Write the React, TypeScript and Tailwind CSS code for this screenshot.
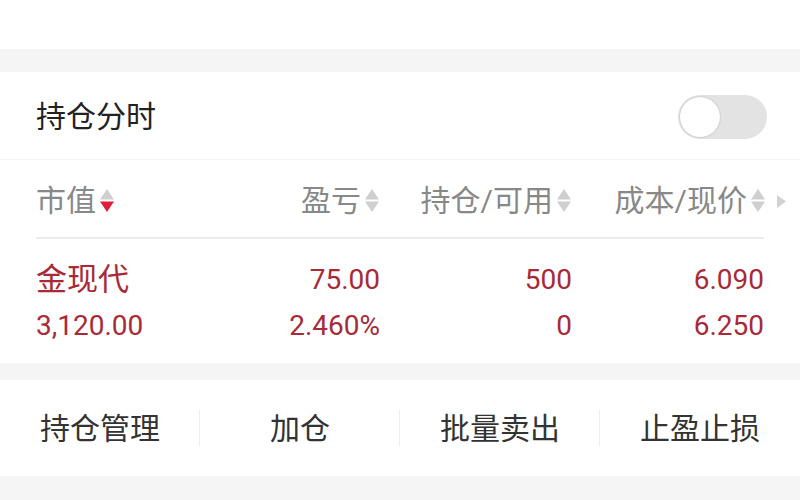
import React from "react";

const SortIcon = ({ active = false }: { active?: boolean }) => (
  <svg width="16" height="25" viewBox="0 0 16 25" className="ml-[3px] shrink-0">
    <path d="M8 1 L15 11.5 L1 11.5 Z" fill="#cfcfcf" />
    <path d="M1 13.5 L15 13.5 L8 24 Z" fill={active ? "#e0203a" : "#cfcfcf"} />
  </svg>
);

const HeaderCell = ({ label, active, right }: { label: string; active?: boolean; right?: boolean }) => (
  <div className={`flex items-center ${right ? "justify-end" : "justify-start"}`}>
    <span>{label}</span>
    <SortIcon active={active} />
  </div>
);

const actions = ["持仓管理", "加仓", "批量卖出", "止盈止损"];

const App = () => {
  return (
    <div
      className="w-[800px] h-[500px] overflow-hidden bg-white text-[#222]"
      style={{ fontFamily: 'Roboto, "Noto Sans CJK SC", sans-serif' }}
    >
      <div className="h-[49px] bg-white"></div>
      <div className="h-[23px] bg-[#f5f5f5]"></div>

      <section className="bg-white">
        <div className="h-[88px] pl-[36px] pr-[33px] pt-[3px] flex items-center justify-between border-b border-[#f4f4f4]">
          <span className="text-[30px] leading-none">持仓分时</span>
          <div className="w-[89px] h-[44px] rounded-full bg-[#e3e3e3] p-[2px] flex items-center">
            <span className="w-[40px] h-[40px] rounded-full bg-white shadow-[0_0_2px_rgba(0,0,0,0.25)]"></span>
          </div>
        </div>

        <div className="relative px-[36px]">
          <div className="h-[79px] pt-[3px] grid grid-cols-[190px_154px_192px_194px] items-center text-[30px] text-[#888] border-b-2 border-[#ececec]">
            <HeaderCell label="市值" active />
            <HeaderCell label="盈亏" right />
            <HeaderCell label="持仓/可用" right />
            <HeaderCell label="成本/现价" right />
          </div>
          <svg width="11" height="15" viewBox="0 0 11 15" className="absolute right-[13px] top-[34px]">
            <path d="M1 1 L10 7.5 L1 14 Z" fill="#d2d2d2" />
          </svg>

          <div className="grid grid-cols-[190px_154px_192px_194px] pt-[18px] pb-[14px] text-[#a82a38] text-[28px] leading-[46px]">
            <div className="flex flex-col">
              <span className="text-[31px]">金现代</span>
              <span>3,120.00</span>
            </div>
            <div className="flex flex-col items-end">
              <span>75.00</span>
              <span>2.460%</span>
            </div>
            <div className="flex flex-col items-end">
              <span>500</span>
              <span>0</span>
            </div>
            <div className="flex flex-col items-end pr-[2px]">
              <span>6.090</span>
              <span>6.250</span>
            </div>
          </div>
        </div>
      </section>

      <div className="h-[17px] bg-[#f5f5f5]"></div>

      <nav className="h-[96px] bg-white grid grid-cols-4 items-center">
        {actions.map((a, i) => (
          <div key={a} className="relative flex items-center justify-center h-full">
            <span className="text-[30px] text-[#333]">{a}</span>
            {i < actions.length - 1 && (
              <span className="absolute right-0 top-[30px] h-[36px] w-px bg-[#eeeeee]"></span>
            )}
          </div>
        ))}
      </nav>

      <div className="h-[30px] bg-[#f5f5f5]"></div>
    </div>
  );
};

export default App;
